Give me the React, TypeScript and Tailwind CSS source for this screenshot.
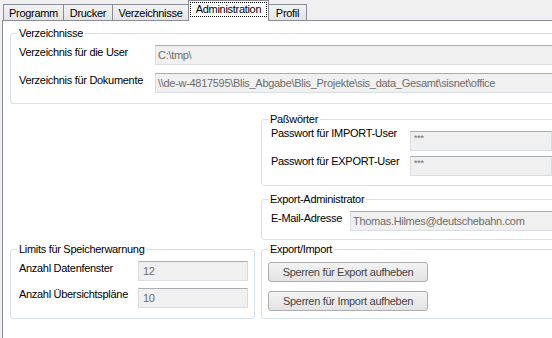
import React from 'react'

type TabDef = { label: string; width: string }

const TABS: TabDef[] = [
  { label: 'Programm', width: 'w-[61px]' },
  { label: 'Drucker', width: 'w-[50px]' },
  { label: 'Verzeichnisse', width: 'w-[77px]' },
  { label: 'Administration', width: 'w-[81px]' },
  { label: 'Profil', width: 'w-[39px]' },
]
const ACTIVE = 'Administration'

const DOC_PATH = '\\\\de-w-4817595\\Blis_Abgabe\\Blis_Projekte\\sis_data_Gesamt\\sisnet\\office'

function Tab({ tab, first }: { tab: TabDef; first: boolean }) {
  if (tab.label === ACTIVE) {
    return (
      <div
        className={`${tab.width} -ml-px -mb-px h-[21px] relative z-10 flex border border-b-0 border-[#898c95] bg-white px-[1px] pt-[1px]`}
      >
        <div className="flex-1 h-[15px] border border-dotted border-black text-center leading-[13px]">
          {tab.label}
        </div>
      </div>
    )
  }
  return (
    <div
      className={`${tab.width} ${first ? '' : '-ml-px'} h-[16px] border border-b-0 border-[#898c95] bg-linear-to-b from-[#f3f3f3] to-[#e4e4e4] text-center leading-[13px] pt-[2px]`}
    >
      {tab.label}
    </div>
  )
}

function Group({
  title,
  className,
  children,
}: {
  title: string
  className: string
  children: React.ReactNode
}) {
  return (
    <fieldset className={`border border-[#d5dfe5] rounded-[3px] min-w-0 ${className}`}>
      <legend className="ml-[6px] px-[2px] leading-[13px]">{title}</legend>
      {children}
    </fieldset>
  )
}

function Field({ value, className, pad = 'pl-[2px]' }: { value: string; className: string; pad?: string }) {
  return (
    <div
      className={`h-[20px] shrink-0 border border-[#dadde3] border-t-[#abadb3] bg-[#f0f0f0] ${pad} leading-[18px] text-[#6d6d6d] whitespace-nowrap overflow-hidden ${className}`}
    >
      {value}
    </div>
  )
}

function Masked({ className }: { className: string }) {
  return (
    <div
      className={`h-[20px] shrink-0 border border-[#dadde3] border-t-[#abadb3] bg-[#f0f0f0] pl-[3px] pt-[2px] text-[9px] leading-[9px] text-[#6d6d6d] ${className}`}
    >
      ***
    </div>
  )
}

function SysButton({ label }: { label: string }) {
  return (
    <div className="w-[160px] h-[20px] border border-[#adadad] rounded-[3px] bg-linear-to-b from-[#f3f3f3] to-[#e3e3e3] text-center leading-[18px] text-[#444]">
      {label}
    </div>
  )
}

export default function App() {
  return (
    <div className="w-[552px] h-[338px] overflow-hidden bg-[#f0f0f0] flex flex-col font-['Liberation_Sans',Arial,sans-serif] text-[11px] leading-[13px] tracking-[-0.3px] text-black">
      {/* tab strip */}
      <div className="h-[20px] shrink-0 flex items-end pl-[3px]">
        {TABS.map((t, i) => (
          <Tab key={t.label} tab={t} first={i === 0} />
        ))}
      </div>

      {/* tab page */}
      <div className="flex-1 ml-[2px] w-[650px] border-l border-t border-[#898c95] bg-white flex flex-col items-start">
        <Group title="Verzeichnisse" className="ml-[7px] mt-[6px] w-[590px]">
          <div className="pl-[8px] pt-[5px] pb-[10px] flex flex-col gap-[8px]">
            <div className="flex items-start h-[20px]">
              <span className="w-[136px] shrink-0 mt-[1px]">Verzeichnis für die User</span>
              <Field value="C:\tmp\" className="w-[440px]" />
            </div>
            <div className="flex items-start h-[20px]">
              <span className="w-[136px] shrink-0 mt-[1px]">Verzeichnis für Dokumente</span>
              <Field value={DOC_PATH} className="w-[440px]" />
            </div>
          </div>
        </Group>

        <div className="ml-[258px] flex flex-col">
          <Group title="Paßwörter" className="mt-[9px] w-[330px]">
            <div className="pl-[9px] pt-[5px] pb-[9px] flex flex-col gap-[5px]">
              <div className="flex items-start h-[20px]">
                <span className="w-[139px] shrink-0 -mt-[4px]">Passwort für IMPORT-User</span>
                <Masked className="w-[142px]" />
              </div>
              <div className="flex items-start h-[20px]">
                <span className="w-[139px] shrink-0 -mt-[1px]">Passwort für EXPORT-User</span>
                <Masked className="w-[142px]" />
              </div>
            </div>
          </Group>

          <Group title="Export-Administrator" className="mt-[7px] w-[330px]">
            <div className="pl-[9px] pt-[5px] pb-[8px]">
              <div className="flex items-start h-[20px]">
                <span className="w-[79px] shrink-0 mt-[1px]">E-Mail-Adresse</span>
                <Field value="Thomas.Hilmes@deutschebahn.com" className="w-[240px]" />
              </div>
            </div>
          </Group>
        </div>

        <div className="ml-[7px] mt-[3px] flex gap-[6px]">
          <Group title="Limits für Speicherwarnung" className="w-[245px]">
            <div className="pl-[8px] pt-[5px] pb-[10px] flex flex-col gap-[7px]">
              <div className="flex items-start h-[20px]">
                <span className="w-[119px] shrink-0 mt-[1px]">Anzahl Datenfenster</span>
                <Field value="12" className="w-[110px]" pad="pl-[4px]" />
              </div>
              <div className="flex items-start h-[20px]">
                <span className="w-[119px] shrink-0">Anzahl Übersichtspläne</span>
                <Field value="10" className="w-[110px]" pad="pl-[4px]" />
              </div>
            </div>
          </Group>

          <Group title="Export/Import" className="w-[330px]">
            <div className="pl-[6px] pt-[6px] pb-[7px] flex flex-col gap-[9px]">
              <SysButton label="Sperren für Export aufheben" />
              <SysButton label="Sperren für Import aufheben" />
            </div>
          </Group>
        </div>
      </div>
    </div>
  )
}
